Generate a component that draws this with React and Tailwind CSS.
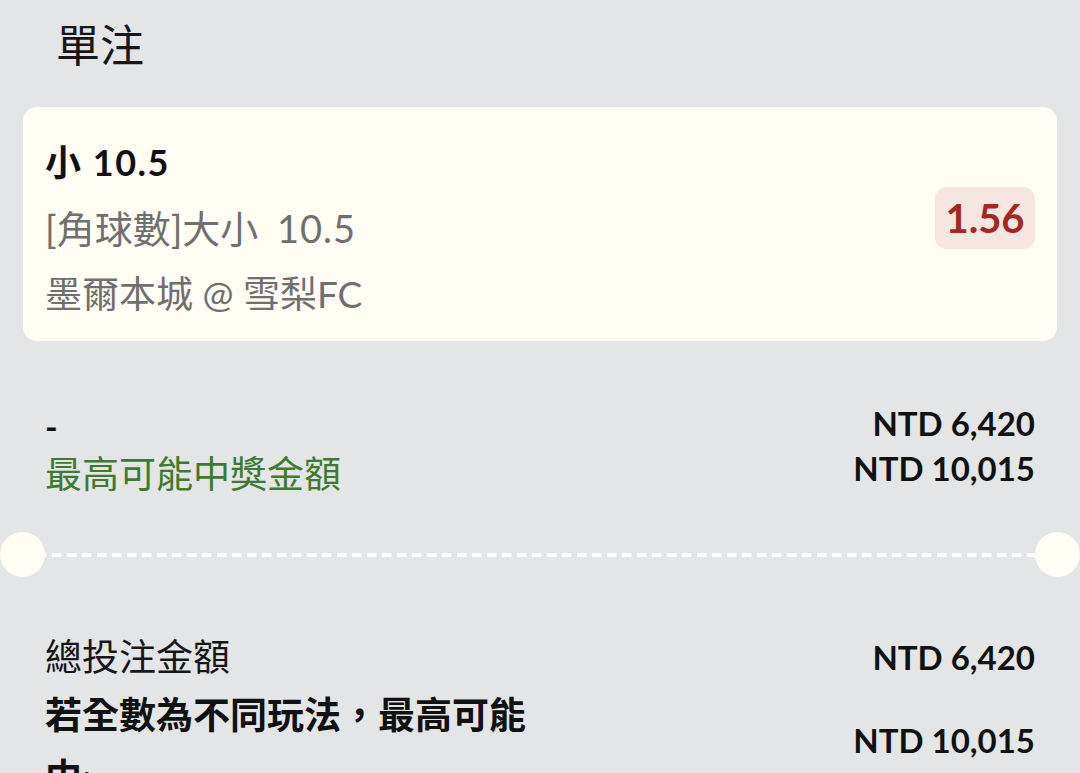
import React from 'react';

const FONT = "font-['Lato','Noto_Sans_CJK_TC',sans-serif]";

function Divider() {
  return (
    <div className="mt-[34px] flex h-[45px] items-center">
      <div className="h-[45px] w-[45px] shrink-0 rounded-full bg-[#fffdf4]" />
      <svg className="h-[4px] flex-1" preserveAspectRatio="none">
        <line
          x1="0"
          y1="2"
          x2="100%"
          y2="2"
          stroke="#ffffff"
          strokeWidth="4"
          strokeDasharray="9.5 5.5"
          strokeDashoffset="-7"
        />
      </svg>
      <div className="h-[45px] w-[45px] shrink-0 rounded-full bg-[#fffdf4]" />
    </div>
  );
}

export default function App() {
  return (
    <div className={`min-h-screen w-[1080px] overflow-hidden bg-[#e4e5e7] ${FONT}`}>
      <div className="pl-[56px] text-[44px] leading-[90px] text-[#161616]">單注</div>

      {/* selection card */}
      <div className="mx-[23px] mt-[17px] flex h-[234px] items-start justify-between rounded-[14px] bg-[#fffdf4] px-[22px] pt-[22px] pb-[14px]">
        <div>
          <div className="text-[36px] font-bold leading-[66px] tracking-[1.5px] text-[#111111]">小 10.5</div>
          <div className="text-[38px] leading-[66px] text-[#6f6f6f]">
            [角球數]大小<span className="ml-[8px] tracking-[1px]"> 10.5</span>
          </div>
          <div className="text-[37px] leading-[66px] text-[#6f6f6f]">墨爾本城 @ 雪梨FC</div>
        </div>
        <div className="mt-[58px] flex h-[62px] w-[100px] items-center justify-center rounded-[12px] bg-[#f6e6e1] text-[40px] font-bold text-[#a5281f]">
          1.56
        </div>
      </div>

      {/* stake + potential win */}
      <div className="mt-[60px] flex items-start justify-between px-[45px]">
        <div className="pt-[4px]">
          <div className="text-[34px] font-bold leading-[44px] text-[#111111]">-</div>
          <div className="text-[37px] leading-[49px] text-[#3e7a2d]">最高可能中獎金額</div>
        </div>
        <div className="text-right text-[33px] font-bold leading-[45px] text-[#111111]">
          <div>NTD 6,420</div>
          <div>NTD 10,015</div>
        </div>
      </div>

      <Divider />

      {/* totals */}
      <div className="mt-[57px] px-[45px]">
        <div className="flex items-center justify-between leading-[46px]">
          <div className="text-[37px] text-[#161616]">總投注金額</div>
          <div className="text-[33px] font-bold text-[#111111]">NTD 6,420</div>
        </div>
        <div className="mt-[4px] flex items-center justify-between">
          <div className="w-[495px] text-[37px] font-bold leading-[62px] text-[#111111]">
            若全數為不同玩法，最高可能中:
          </div>
          <div className="mb-[12px] text-[33px] font-bold leading-[46px] text-[#111111]">NTD 10,015</div>
        </div>
      </div>
    </div>
  );
}
